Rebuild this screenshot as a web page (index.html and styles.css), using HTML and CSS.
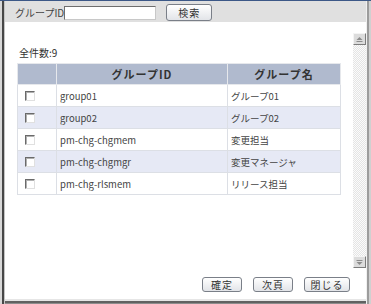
FILE: index.html
```html
<!doctype html>
<html lang="ja">
  <head>
    <meta charset="UTF-8" />
    <title>グループ検索</title>
    <link rel="stylesheet" href="styles.css">
  </head>
  <body>
    <div class="window">
      <div class="searchbar">
        <label class="search-label" for="gid">グループID</label>
        <input class="search-input" id="gid" type="text" />
        <button class="btn btn-search" type="button">検索</button>
      </div>

      <div class="panel">
        <div class="list">
          <div class="count">全件数:9</div>
          <table class="grid">
            <colgroup>
              <col class="col-check" />
              <col class="col-id" />
              <col class="col-name" />
            </colgroup>
            <thead>
              <tr>
                <th></th>
                <th>グループID</th>
                <th>グループ名</th>
              </tr>
            </thead>
            <tbody>
              <tr>
                <td class="cell-check"><input type="checkbox" /></td>
                <td>group01</td>
                <td>グループ01</td>
              </tr>
              <tr class="alt">
                <td class="cell-check"><input type="checkbox" /></td>
                <td>group02</td>
                <td>グループ02</td>
              </tr>
              <tr>
                <td class="cell-check"><input type="checkbox" /></td>
                <td>pm-chg-chgmem</td>
                <td>変更担当</td>
              </tr>
              <tr class="alt">
                <td class="cell-check"><input type="checkbox" /></td>
                <td>pm-chg-chgmgr</td>
                <td>変更マネージャ</td>
              </tr>
              <tr>
                <td class="cell-check"><input type="checkbox" /></td>
                <td>pm-chg-rlsmem</td>
                <td>リリース担当</td>
              </tr>
            </tbody>
          </table>
        </div>

        <div class="scrollbar">
          <span class="sb-btn">
            <svg width="7" height="5" viewBox="0 0 7 5"><path d="M3.5 0 L6.5 3 H0.5 Z" fill="#8c8c8c"/><rect x="0.5" y="4" width="6" height="1" fill="#8c8c8c"/></svg>
          </span>
          <span class="sb-track"></span>
          <span class="sb-btn">
            <svg width="7" height="5" viewBox="0 0 7 5"><rect x="0.5" y="0" width="6" height="1" fill="#8c8c8c"/><path d="M0.5 2 H6.5 L3.5 5 Z" fill="#8c8c8c"/></svg>
          </span>
        </div>
      </div>

      <div class="actions">
        <button class="btn" type="button">確定</button>
        <button class="btn" type="button">次頁</button>
        <button class="btn btn-wide" type="button">閉じる</button>
      </div>
    </div>
  </body>
</html>
```

FILE: styles.css
```css
body {
  margin: 0;
  font-family: "Noto Sans CJK JP", "Noto Sans", sans-serif;
  font-size: 10px;
  color: #333;
}
.window {
  width: 371px;
  height: 304px;
  box-sizing: border-box;
  border-top: 1px solid #3c5887;
  padding: 0 5px 5px 5px;
  background: #fff;
  box-shadow:
    inset 2px 0 0 #d8d8d8,
    inset 4px 0 0 #474747,
    inset 5px 0 0 #c4c4c4,
    inset -2px 0 0 #d0d0d0,
    inset -4px 0 0 #9c9c9c,
    inset -5px 0 0 #f0f0f0,
    inset 0 -1px 0 #8c8c8c,
    inset 0 -3px 0 #616161,
    inset 0 -5px 0 #e6e6e6;
}
.searchbar {
  display: flex;
  align-items: flex-start;
  height: 21px;
  padding-left: 10px;
  background: #e0e0e0;
}
.search-label {
  margin-top: 6px;
  line-height: 12px;
  color: #444;
}
.search-input {
  box-sizing: border-box;
  width: 92px;
  height: 14px;
  margin: 5px 0 0 0;
  padding: 0 2px;
  border: 1px solid;
  border-color: #6e6e6e #c8c8c8 #c8c8c8 #6e6e6e;
  background: #fff;
  font: inherit;
}
.btn {
  box-sizing: border-box;
  width: 40px;
  height: 15px;
  padding: 0;
  border: 1px solid #7a7f88;
  border-radius: 3px;
  background: linear-gradient(#ffffff, #e2e4e8);
  font-family: inherit;
  font-size: 10px;
  line-height: 12px;
  letter-spacing: 1px;
  color: #333;
}
.btn-search {
  width: 46px;
  height: 17px;
  margin: 3px 0 0 10px;
}
.btn-wide {
  width: 46px;
}
.panel {
  display: flex;
  height: 235px;
  margin-top: 11px;
}
.list {
  flex: 1;
  padding: 14px 0 0 12px;
}
.count {
  margin-left: 2px;
  line-height: 12px;
  margin-bottom: 4px;
}
.grid {
  width: 323px;
  table-layout: fixed;
  border-collapse: collapse;
  border: 1px solid #dcdfe5;
}
.col-check {
  width: 39px;
}
.col-id {
  width: 171px;
}
.col-name {
  width: 113px;
}
.grid th {
  height: 20px;
  padding: 0;
  border: 1px solid #e6e8ec;
  background: #b0bace;
  font-size: 11px;
  font-weight: bold;
  letter-spacing: 1px;
  color: #333;
}
.grid td {
  height: 21px;
  padding: 0 0 0 3px;
  border: 1px solid #dcdfe5;
  font-size: 9.5px;
  color: #444;
}
.grid .alt td {
  background: #e6e9f5;
}
.grid td.cell-check {
  padding-left: 7px;
}
.grid input[type="checkbox"] {
  appearance: none;
  display: block;
  width: 10px;
  height: 10px;
  margin: 0;
  border: 1px solid;
  border-color: #6a6a6a #e0e0e0 #e0e0e0 #6a6a6a;
  box-shadow: inset 1px 1px 0 #b0b0b0;
  background: #fff;
}
.scrollbar {
  display: flex;
  flex-direction: column;
  width: 13px;
}
.sb-btn {
  box-sizing: border-box;
  display: flex;
  align-items: center;
  justify-content: center;
  height: 12px;
  border: 1px solid;
  border-color: #f4f4f4 #7c7c7c #7c7c7c #f4f4f4;
  background: #dcdcdc;
}
.sb-track {
  flex: 1;
  background: repeating-conic-gradient(#e4e4e4 0 25%, #fbfbfb 0 50%) 0 0 / 2px 2px;
}
.actions {
  display: flex;
  justify-content: flex-end;
  gap: 11px;
  margin-top: 9px;
  padding-right: 16px;
}
```
